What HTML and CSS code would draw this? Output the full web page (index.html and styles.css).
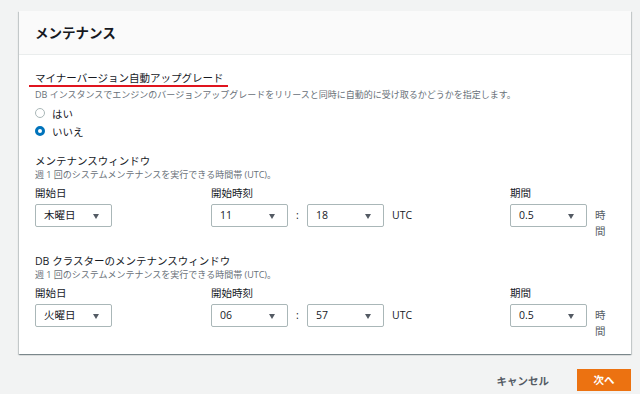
FILE: index.html
```html
<!DOCTYPE html>
<html>
<head>
<meta charset="UTF-8">
<meta name="viewport" content="width=device-width, initial-scale=1.0">
<title>メンテナンス</title>
<link rel="stylesheet" href="styles.css">
</head>
<body>
<div class="page">
  <div class="card">
    <div class="card-header">メンテナンス</div>
    <div class="card-body">
      <div class="label marked">マイナーバージョン自動アップグレード</div>
      <div class="desc">DB インスタンスでエンジンのバージョンアップグレードをリリースと同時に自動的に受け取るかどうかを指定します。</div>
      <div class="radios">
        <div class="radio-row"><span class="radio"></span>はい</div>
        <div class="radio-row"><span class="radio checked"></span>いいえ</div>
      </div>

      <div class="section">
        <div class="label">メンテナンスウィンドウ</div>
        <div class="desc">週 1 回のシステムメンテナンスを実行できる時間帯 (UTC)。</div>
        <div class="fields">
          <div class="field col1">
            <div class="label">開始日</div>
            <div class="select">木曜日</div>
          </div>
          <div class="field col2">
            <div class="label">開始時刻</div>
            <div class="time-row">
              <div class="select">11</div>
              <span class="colon">:</span>
              <div class="select">18</div>
              <span class="unit">UTC</span>
            </div>
          </div>
          <div class="field">
            <div class="label">期間</div>
            <div class="time-row">
              <div class="select">0.5</div>
              <span class="hours">時間</span>
            </div>
          </div>
        </div>
      </div>

      <div class="section">
        <div class="label">DB クラスターのメンテナンスウィンドウ</div>
        <div class="desc">週 1 回のシステムメンテナンスを実行できる時間帯 (UTC)。</div>
        <div class="fields">
          <div class="field col1">
            <div class="label">開始日</div>
            <div class="select">火曜日</div>
          </div>
          <div class="field col2">
            <div class="label">開始時刻</div>
            <div class="time-row">
              <div class="select">06</div>
              <span class="colon">:</span>
              <div class="select">57</div>
              <span class="unit">UTC</span>
            </div>
          </div>
          <div class="field">
            <div class="label">期間</div>
            <div class="time-row">
              <div class="select">0.5</div>
              <span class="hours">時間</span>
            </div>
          </div>
        </div>
      </div>
    </div>
  </div>

  <div class="footer">
    <span class="cancel">キャンセル</span>
    <span class="next">次へ</span>
  </div>
</div>
</body>
</html>
```

FILE: styles.css
```css
body {
  margin: 0;
  background-color: #f2f3f3;
  font-family: "Open Sans", "Noto Sans CJK JP", sans-serif;
  color: #16191f;
}

.page {
  padding: 11px 9px 0 19px;
}

.card {
  width: 612px;
  background-color: white;
  box-shadow: 0 1px 1px 0 rgba(0, 28, 36, 0.3), 1px 1px 1px 0 rgba(0, 28, 36, 0.15), -1px 1px 1px 0 rgba(0, 28, 36, 0.15);
}

.card-header {
  height: 43px;
  line-height: 43px;
  padding-left: 16px;
  background-color: #fafafa;
  border-bottom: 1px solid #eaeded;
  font-family: "Noto Sans CJK JP", sans-serif;
  font-size: 13.5px;
  font-weight: bold;
}

.card-body {
  padding: 10px 16px 15px 16px;
}

.label {
  font-size: 10.5px;
  line-height: 14px;
}

.marked {
  position: relative;
  display: inline-block;
}

.marked::after {
  content: "";
  position: absolute;
  left: -6px;
  right: -5px;
  top: 14px;
  height: 2px;
  background-color: #e0141e;
}

.desc {
  margin-top: 2px;
  font-size: 9px;
  line-height: 12px;
  color: #687078;
}

.radios {
  margin-top: 3px;
}

.radio-row {
  display: flex;
  align-items: center;
  height: 18px;
  font-size: 10.5px;
}

.radio {
  width: 8px;
  height: 8px;
  border: 1px solid #aab7b8;
  border-radius: 50%;
  margin-right: 7px;
}

.radio.checked {
  width: 4px;
  height: 4px;
  border: 3px solid #0073bb;
}

.section {
  margin-top: 14px;
}

.section + .section {
  margin-top: 15px;
}

.section .desc {
  margin-top: 1px;
}

.fields {
  display: flex;
  margin-top: 5px;
}

.col1 {
  width: 176px;
}

.col2 {
  width: 299px;
}

.field .label {
  margin-bottom: 4px;
}

.time-row {
  display: flex;
  align-items: flex-start;
}

.select {
  position: relative;
  width: 75px;
  height: 21px;
  line-height: 21px;
  padding-left: 8px;
  box-sizing: content-box;
  width: 67px;
  border: 1px solid #aab7b8;
  border-radius: 2px;
  font-size: 10.5px;
  color: #16191f;
}

.select::after {
  content: "";
  position: absolute;
  right: 12px;
  top: 9px;
  border-left: 3.5px solid transparent;
  border-right: 3.5px solid transparent;
  border-top: 5px solid #545b64;
}

.colon {
  width: 19px;
  text-align: center;
  font-size: 10.5px;
  line-height: 23px;
}

.unit {
  margin-left: 8px;
  font-size: 10.5px;
  line-height: 23px;
}

.hours {
  width: 11px;
  margin-left: 8px;
  margin-top: 3px;
  font-size: 10.5px;
  line-height: 16px;
  color: #545b64;
}

.footer {
  display: flex;
  justify-content: flex-end;
  align-items: center;
  width: 612px;
  margin-top: 15px;
}

.cancel {
  margin-right: 28px;
  font-family: "Noto Sans CJK JP", sans-serif;
  font-size: 10.5px;
  font-weight: bold;
  color: #545b64;
}

.next {
  width: 54px;
  height: 22px;
  line-height: 22px;
  text-align: center;
  background-color: #ec7211;
  color: white;
  font-family: "Noto Sans CJK JP", sans-serif;
  font-size: 10.5px;
  font-weight: bold;
}
```
